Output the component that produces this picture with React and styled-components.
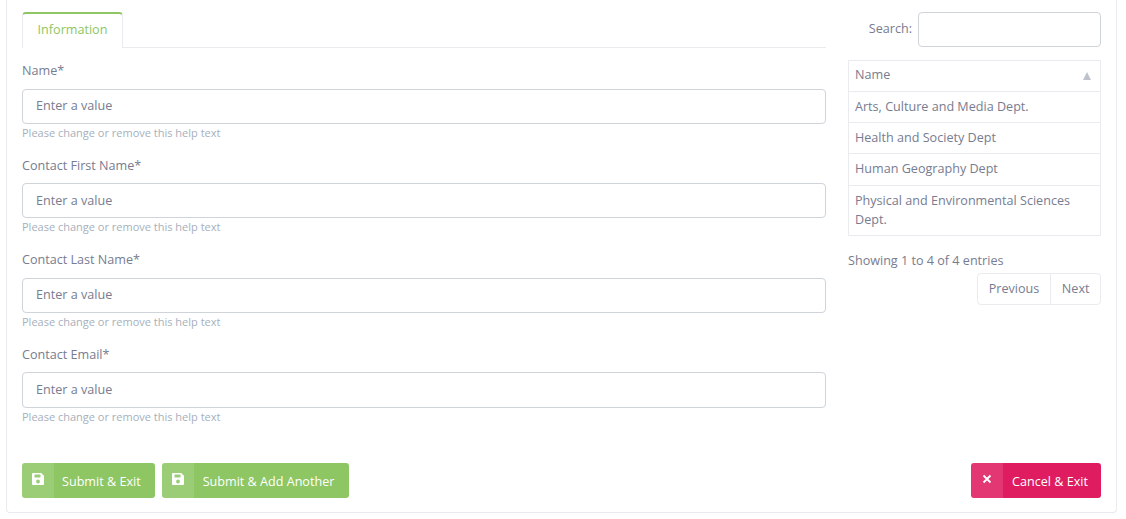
import React from 'react';
import styled, { createGlobalStyle } from 'styled-components';

const GlobalStyle = createGlobalStyle`
  html, body {
    margin: 0;
    padding: 0;
    background: #fff;
    overflow: hidden;
  }
  body {
    font-family: "Open Sans", "Liberation Sans", sans-serif;
    font-size: 12.6px;
    color: #777c90;
  }
`;

const Page = styled.div`
  height: 519px;
  padding: 0 9px 6px 6px;
  box-sizing: border-box;
`;

const Card = styled.div`
  height: 513px;
  box-sizing: border-box;
  border: 1px solid #e9ebee;
  border-top: 0;
  border-radius: 0 0 4px 4px;
  padding: 12px 15px 14px 15px;
  display: flex;
  flex-direction: column;
  justify-content: space-between;
`;

const Columns = styled.div`
  display: grid;
  grid-template-columns: 804px 253px;
  column-gap: 22px;
`;

const TabBar = styled.div`
  display: flex;
  border-bottom: 1px solid #e9ebee;
  height: 35px;
  box-sizing: content-box;
`;

const Tab = styled.div`
  width: 101px;
  height: 36px;
  box-sizing: border-box;
  padding-bottom: 3px;
  background: #fff;
  border: 1px solid #e9ebee;
  border-top: 2px solid #8dc663;
  border-bottom: 0;
  border-radius: 4px 4px 0 0;
  color: #8dc663;
  display: flex;
  align-items: center;
  justify-content: center;
`;

const Form = styled.div`
  display: flex;
  flex-direction: column;
  padding-top: 11.7px;
`;

const Field = styled.div`
  height: 94.55px;
`;

const Label = styled.div`
  line-height: 20px;
  padding-top: 1.7px;
  margin-bottom: 7.3px;
`;

const TextInput = styled.div`
  height: 35.2px;
  box-sizing: border-box;
  border: 1px solid #ced4da;
  border-radius: 4px;
  padding: 0 13px 1.6px;
  display: flex;
  align-items: center;
`;

const Help = styled.div`
  font-size: 11px;
  line-height: 18px;
  color: #a6b0bc;
`;

const Side = styled.div`
  display: flex;
  flex-direction: column;
`;

const SearchRow = styled.div`
  display: flex;
  justify-content: flex-end;
  align-items: center;
  gap: 6px;
  margin-bottom: 13px;
`;

const SearchLabel = styled.span`
  padding-bottom: 3px;
`;

const SearchBox = styled.div`
  width: 183px;
  height: 35px;
  box-sizing: border-box;
  border: 1px solid #ced4da;
  border-radius: 4px;
`;

const Table = styled.div`
  border: 1px solid #e9ebee;
`;

const Row = styled.div`
  padding: 5px 6px 6.2px;
  line-height: 19px;
  border-top: 1px solid #e9ebee;
  &:first-child {
    border-top: 0;
  }
`;

const HeadRow = styled(Row)`
  display: flex;
  justify-content: space-between;
  align-items: center;
  height: 30px;
  box-sizing: border-box;
  padding: 0 6px 3px;
`;

const SortArrow = styled.span`
  width: 0;
  height: 0;
  margin: 3px 3px 0 0;
  border-left: 4px solid transparent;
  border-right: 4px solid transparent;
  border-bottom: 8px solid #bdc2cb;
`;

const Info = styled.div`
  margin-top: 15px;
  line-height: 20px;
`;

const Pager = styled.div`
  align-self: flex-end;
  display: flex;
  margin-top: 2px;
  border: 1px solid #e9ebee;
  border-radius: 4px;
`;

const PageLink = styled.div`
  height: 30px;
  padding: 0 11px;
  display: flex;
  align-items: center;
  & + & {
    border-left: 1px solid #e9ebee;
    padding: 0 10.5px;
  }
`;

const Actions = styled.div`
  display: flex;
  gap: 7px;
`;

const Button = styled.div`
  display: flex;
  height: 35px;
  border-radius: 3px;
  overflow: hidden;
  color: #fff;
  background: ${p => (p.$danger ? '#de1c5f' : '#8dc663')};
  margin-left: ${p => (p.$danger ? 'auto' : '0')};
`;

const ButtonIcon = styled.span`
  width: 32px;
  display: flex;
  justify-content: center;
  padding-top: ${p => (p.$danger ? '11px' : '10px')};
  box-sizing: border-box;
  background: rgba(255, 255, 255, 0.12);
`;

const ButtonText = styled.span`
  display: flex;
  align-items: center;
  padding: 1px ${p => p.$right}px 0 ${p => p.$left}px;
`;

const SaveIcon = () => (
  <svg width="12" height="12" viewBox="0 0 12 12">
    <path
      fill="#fff"
      fillRule="evenodd"
      d="M1 0h8.2L12 2.8V11a1 1 0 0 1-1 1H1a1 1 0 0 1-1-1V1a1 1 0 0 1 1-1zM2.5 1.6v2.9h6V1.6zM6 6.6a1.9 1.9 0 1 0 0 3.8 1.9 1.9 0 0 0 0-3.8z"
    />
  </svg>
);

const CloseIcon = () => (
  <svg width="10" height="10" viewBox="0 0 10 10">
    <path d="M1.5 1.5l7 7M8.5 1.5l-7 7" stroke="#fff" strokeWidth="1.8" fill="none" />
  </svg>
);

const fields = ['Name*', 'Contact First Name*', 'Contact Last Name*', 'Contact Email*'];

const departments = [
  'Arts, Culture and Media Dept.',
  'Health and Society Dept',
  'Human Geography Dept',
  'Physical and Environmental Sciences Dept.',
];

export default function App() {
  return (
    <Page>
      <GlobalStyle />
      <Card>
        <Columns>
          <div>
            <TabBar>
              <Tab>Information</Tab>
            </TabBar>
            <Form>
              {fields.map(name => (
                <Field key={name}>
                  <Label>{name}</Label>
                  <TextInput>Enter a value</TextInput>
                  <Help>Please change or remove this help text</Help>
                </Field>
              ))}
            </Form>
          </div>
          <Side>
            <SearchRow>
              <SearchLabel>Search:</SearchLabel>
              <SearchBox />
            </SearchRow>
            <Table>
              <HeadRow>
                Name
                <SortArrow />
              </HeadRow>
              {departments.map(name => (
                <Row key={name}>{name}</Row>
              ))}
            </Table>
            <Info>Showing 1 to 4 of 4 entries</Info>
            <Pager>
              <PageLink>Previous</PageLink>
              <PageLink>Next</PageLink>
            </Pager>
          </Side>
        </Columns>
        <Actions>
          <Button>
            <ButtonIcon><SaveIcon /></ButtonIcon>
            <ButtonText $left={8} $right={14}>Submit &amp; Exit</ButtonText>
          </Button>
          <Button>
            <ButtonIcon><SaveIcon /></ButtonIcon>
            <ButtonText $left={9} $right={15}>Submit &amp; Add Another</ButtonText>
          </Button>
          <Button $danger>
            <ButtonIcon $danger><CloseIcon /></ButtonIcon>
            <ButtonText $left={9} $right={13}>Cancel &amp; Exit</ButtonText>
          </Button>
        </Actions>
      </Card>
    </Page>
  );
}
